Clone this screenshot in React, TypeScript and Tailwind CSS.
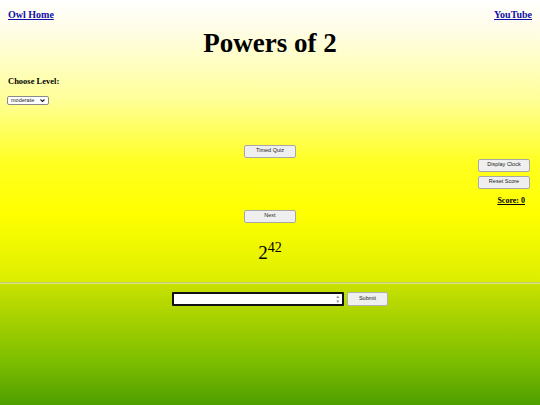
import { useState } from "react";

const serif = "font-['Liberation_Serif','Times_New_Roman',serif]";
const sans = "font-['Liberation_Sans',Arial,sans-serif]";

const btn = `${sans} h-[13px] w-[52px] rounded-[2px] border border-[#a8a8a8] bg-[#efefef] text-[5.5px] leading-none text-[#222]`;

const App = () => {
    const [level, setLevel] = useState("moderate");
    const [answer, setAnswer] = useState("");
    const score = 0;

    return (
        <div className={`${serif} flex min-h-[405px] w-full flex-col text-black`}>
            {/* Top section */}
            <div className="h-[282px] bg-[linear-gradient(to_bottom,#ffffff_0%,#fffde8_10%,#ffff9a_35%,#ffff20_58%,#ffff00_76%,#dcee00_100%)]">
                <div className="flex justify-between px-[8px] pt-[9px]">
                    <a href="#" className="text-[10px] font-bold leading-[12px] text-[#1010a8] underline">Owl Home</a>
                    <a href="#" className="text-[10px] font-bold leading-[12px] text-[#1010a8] underline">YouTube</a>
                </div>

                <h1 className="mt-[9px] text-center text-[27px] font-bold leading-none">Powers of 2</h1>

                <div className="mt-[20px] px-[8px] text-[8.5px] font-bold leading-none">Choose Level:</div>
                <div className="mt-[10px] flex px-[7px]">
                    <div className="relative flex">
                        <select
                            value={level}
                            onChange={(e) => setLevel(e.target.value)}
                            className={`${sans} h-[9px] w-[42px] appearance-none rounded-[2px] border border-[#8a8a8a] bg-white pl-[3px] pt-[1px] text-[5.5px] leading-none text-[#222] outline-none`}
                        >
                            <option value="easy">easy</option>
                            <option value="moderate">moderate</option>
                            <option value="hard">hard</option>
                        </select>
                        <svg
                            className="pointer-events-none absolute right-[4px] top-[3px]"
                            width="5"
                            height="3"
                            viewBox="0 0 10 6"
                            fill="none"
                            stroke="#222"
                            strokeWidth="2.2"
                        >
                            <path d="M1 1l4 4 4-4" />
                        </svg>
                    </div>
                </div>

                <div className="mt-[40px] grid grid-cols-[1fr_auto_1fr]">
                    <div />
                    <div className="flex flex-col">
                        <button className={btn}>Timed Quiz</button>
                        <button className={`${btn} mt-[52px]`}>Next</button>
                    </div>
                    <div className="flex justify-end pr-[10px]">
                        <div className="mt-[14px] flex flex-col items-end">
                            <button className={btn}>Display Clock</button>
                            <button className={`${btn} mt-[4px]`}>Reset Score</button>
                            <div className="mt-[8px] pr-[5px] text-[8px] font-bold leading-none underline">Score: {score}</div>
                        </div>
                    </div>
                </div>

                <div className="mt-[18px] flex items-start justify-center">
                    <span className="mt-[2px] text-[19px] leading-none">2</span>
                    <span className="text-[14px] leading-none">42</span>
                </div>
            </div>

            <div className="h-[2px] border-t border-t-[#c4c978] border-b border-b-[#d9e57a]" />

            {/* Bottom section */}
            <div className="flex-1 bg-[linear-gradient(to_bottom,#c8e100_0%,#7fbf00_62%,#4f9f00_100%)]">
                <div className="mt-[8px] flex items-start justify-center pl-[20px]">
                    <div className="relative flex">
                        <input
                            type="text"
                            value={answer}
                            onChange={(e) => setAnswer(e.target.value)}
                            className="h-[14px] w-[172px] rounded-[1px] border-2 border-[#111] bg-white px-[2px] text-[7px] outline-none"
                        />
                        <div className={`${sans} pointer-events-none absolute right-[4px] top-[2px] flex flex-col items-center text-[4.5px] leading-[5px] text-[#888]`}>
                            <span>▲</span>
                            <span>▼</span>
                        </div>
                    </div>
                    <button className={`${sans} ml-[3px] h-[14px] w-[41px] rounded-[2px] border border-[#b0b0b0] bg-[#efefef] text-[5.5px] leading-none text-[#222]`}>
                        Submit
                    </button>
                </div>
            </div>
        </div>
    );
};

export default App;
